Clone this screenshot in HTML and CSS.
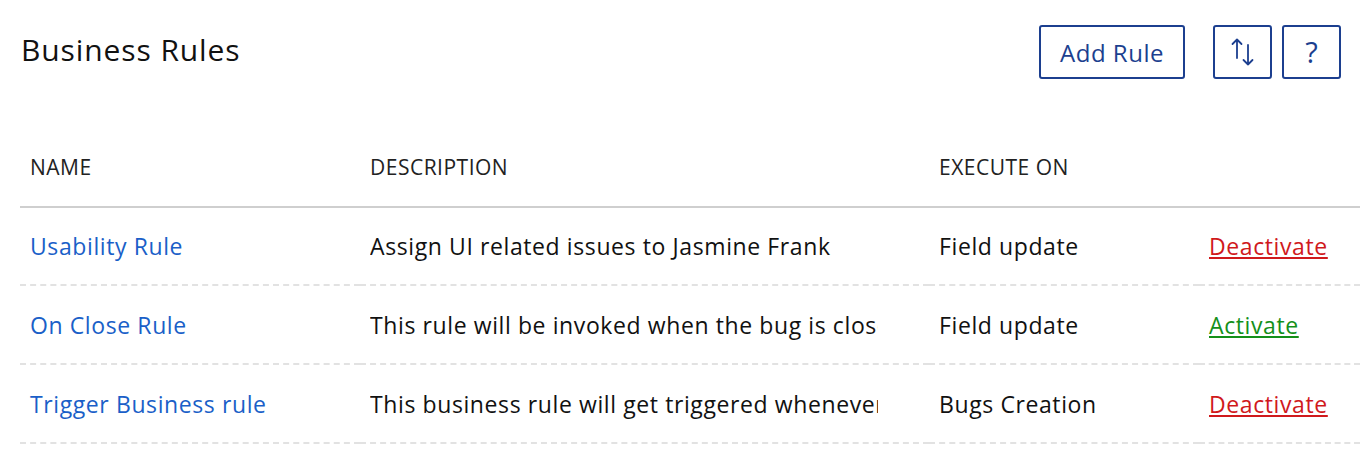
FILE: index.html
```html
<!DOCTYPE html>
<html lang="en">
<head>
    <meta charset="UTF-8">
    <title>Business Rules</title>
    <link rel="stylesheet" href="styles.css">
</head>
<body>
    <div class="page">
        <div class="page-header">
            <h1>Business Rules</h1>
            <div class="actions">
                <button class="btn btn-add">Add Rule</button>
                <div class="icon-group">
                    <button class="btn btn-icon" title="Reorder">
                        <svg width="24" height="28" viewBox="0 0 24 28" fill="none" stroke="currentColor" stroke-width="1.8" stroke-linecap="round" stroke-linejoin="round">
                            <path d="M6 20V1.5M1.5 6L6 1.5 10.5 6"/>
                            <path d="M17 7v19.5M12.5 22l4.5 4.5 4.5-4.5"/>
                        </svg>
                    </button>
                    <button class="btn btn-icon btn-help">?</button>
                </div>
            </div>
        </div>
        <table class="rules">
            <thead>
                <tr>
                    <th class="col-name">NAME</th>
                    <th class="col-desc">DESCRIPTION</th>
                    <th class="col-exec">EXECUTE ON</th>
                    <th class="col-action"></th>
                </tr>
            </thead>
            <tbody>
                <tr>
                    <td><a href="#" class="rule-link">Usability Rule</a></td>
                    <td><div class="desc">Assign UI related issues to Jasmine Frank</div></td>
                    <td>Field update</td>
                    <td><a href="#" class="toggle off">Deactivate</a></td>
                </tr>
                <tr>
                    <td><a href="#" class="rule-link">On Close Rule</a></td>
                    <td><div class="desc">This rule will be invoked when the bug is closed</div></td>
                    <td>Field update</td>
                    <td><a href="#" class="toggle on">Activate</a></td>
                </tr>
                <tr>
                    <td><a href="#" class="rule-link">Trigger Business rule</a></td>
                    <td><div class="desc">This business rule will get triggered whenever a bug is created</div></td>
                    <td>Bugs Creation</td>
                    <td><a href="#" class="toggle off">Deactivate</a></td>
                </tr>
            </tbody>
        </table>
    </div>
</body>
</html>
```

FILE: styles.css
```css
body {
    margin: 0;
    padding: 0;
    background-color: #fff;
    color: #111;
    font-family: 'Open Sans', 'Liberation Sans', sans-serif;
}
.page {
    padding: 25px 2px 0 20px;
}
.page-header {
    display: flex;
    justify-content: space-between;
    align-items: flex-start;
    padding-right: 19px;
}
.page-header h1 {
    margin: 4px 0 0 1px;
    font-size: 30px;
    font-weight: 400;
    letter-spacing: 0.9px;
    color: #111;
}
.actions {
    display: flex;
    gap: 28px;
}
.icon-group {
    display: flex;
    gap: 10px;
}
.btn {
    height: 54px;
    background: #fff;
    border: 2px solid #1c3f8f;
    border-radius: 3px;
    color: #1c3f8f;
    font-family: inherit;
    font-size: 24px;
    letter-spacing: 0.5px;
    cursor: pointer;
}
.btn-add {
    width: 146px;
}
.btn-icon {
    width: 59px;
    display: flex;
    align-items: center;
    justify-content: center;
    padding: 0;
}
.btn-help {
    font-size: 29px;
    letter-spacing: 0;
    padding-bottom: 2px;
}
.rules {
    width: 100%;
    margin-top: 48px;
    border-collapse: collapse;
    table-layout: fixed;
}
.rules th {
    text-align: left;
    font-weight: 400;
    font-size: 21px;
    letter-spacing: 0.5px;
    color: #222;
    padding: 0 10px;
    height: 79px;
    border-bottom: 2px solid #cfcfcf;
}
.col-name { width: 320px; }
.col-desc { width: 549px; }
.col-exec { width: 250px; }
.rules td {
    height: 77px;
    padding: 0 10px;
    font-size: 23px;
    letter-spacing: 0.6px;
    border-bottom: 2px dashed #e2e2e2;
    white-space: nowrap;
}
.rules tbody tr:first-child td {
    height: 76px;
}
.desc {
    width: 508px;
    overflow: hidden;
}
.rule-link {
    color: #1a5fc8;
    text-decoration: none;
}
.toggle.off {
    color: #d0191c;
}
.toggle.on {
    color: #14901a;
}
```
